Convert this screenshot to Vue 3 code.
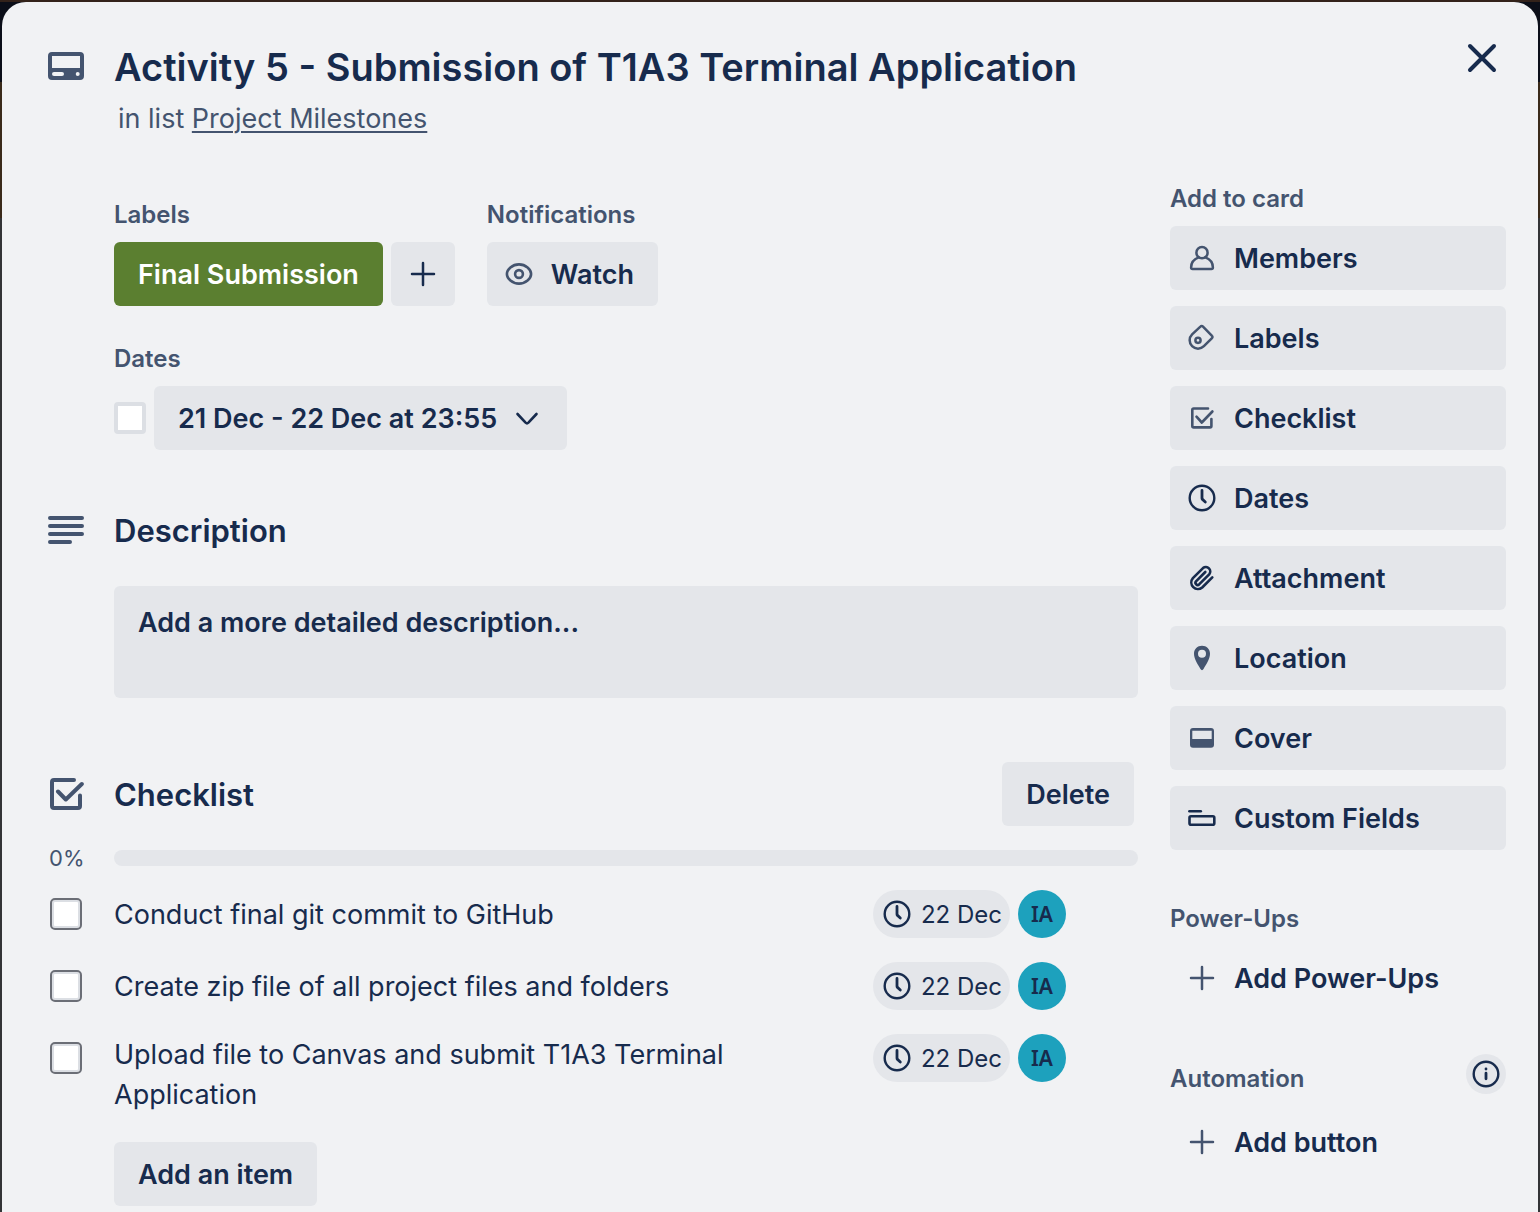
<script setup>
import { ref } from 'vue'

const clock = [
  { d: 'M16 3.7a12.3 12.3 0 1 1 0 24.6a12.3 12.3 0 1 1 0-24.6z', w: 2.4 },
  { d: 'M16 8.4v7.8q0 .7.5 1.2l2.8 2.6', w: 2.8 },
]
const plus = [{ d: 'M16 5v22M5 16h22', w: 2.5 }]

const actions = [
  {
    name: 'Members',
    subtle: true,
    paths: [
      { d: 'M16 5.1a5.6 5.6 0 1 1 0 11.2a5.6 5.6 0 1 1 0-11.2z', w: 2.5 },
      { d: 'M12.6 15.4C8 17.2 5.1 21 5.1 25.4q0 1.5 1.5 1.5h18.8q1.5 0 1.5-1.5c0-4.4-2.9-8.2-7.5-10', w: 2.5 },
    ],
  },
  {
    name: 'Labels',
    subtle: true,
    paths: [
      { d: 'M14.4 4.6L6.1 12.4A8.3 8.3 0 0 0 17.9 24.2L26 16.2a1.6 1.6 0 0 0 0-2.3L17 4.6a1.8 1.8 0 0 0-2.6 0z', w: 2.5 },
      { d: 'M12 15.7a2.6 2.6 0 1 1 0 5.2a2.6 2.6 0 1 1 0-5.2z', w: 2.5 },
    ],
  },
  {
    name: 'Checklist',
    subtle: true,
    paths: [
      { d: 'M22 6.5H7.7q-1.4 0-1.4 1.4V24q0 1.4 1.4 1.4H24q1.4 0 1.4-1.4V17', w: 2.6 },
      { d: 'M10.5 14.7l5.3 5.8L26.4 9.5', w: 2.6 },
    ],
  },
  { name: 'Dates', paths: clock },
  {
    name: 'Attachment',
    paths: [
      { d: 'M26.3 15.4l-10.1 10.1a6.6 6.6 0 0 1-9.3-9.3l10.1-10.1a4.4 4.4 0 0 1 6.2 6.2l-10.1 10.1a2.2 2.2 0 0 1-3.1-3.1l9.3-9.3', w: 2.6 },
    ],
  },
  {
    name: 'Location',
    subtle: true,
    paths: [
      { d: 'M16 3.8c-4.6 0-8 3.4-8 7.9 0 5 4 11 6.5 15.3.8 1.5 2.2 1.5 3 0C20 22.7 24 16.7 24 11.7c0-4.5-3.4-7.9-8-7.9zM16 7.7a4 4 0 1 1 0 8a4 4 0 1 1 0-8z', fill: true },
    ],
  },
  {
    name: 'Cover',
    subtle: true,
    paths: [
      { d: 'M7 6h18q3 0 3 3v13.7q0 3-3 3H7q-3 0-3-3V9q0-3 3-3zM6.3 8.7V17h19.4V8.7z', fill: true },
    ],
  },
  {
    name: 'Custom Fields',
    paths: [
      { d: 'M3.4 9.3h11.4', w: 2.6 },
      { d: 'M5 14.3h21.8q1.5 0 1.5 1.5v5.4q0 1.5-1.5 1.5H5q-1.5 0-1.5-1.5v-5.4q0-1.5 1.5-1.5z', w: 2.6 },
    ],
  },
]

const dueDone = ref(false)
const items = ref([
  { text: 'Conduct final git commit to GitHub', due: '22 Dec', member: 'IA', done: false },
  { text: 'Create zip file of all project files and folders', due: '22 Dec', member: 'IA', done: false },
  { text: 'Upload file to Canvas and submit T1A3 Terminal Application', due: '22 Dec', member: 'IA', done: false },
])
</script>

<template>
  <div class="dialog" role="dialog" aria-labelledby="card-title">
    <header class="header">
      <svg class="icon-lg card-icon" viewBox="0 0 36 36" aria-hidden="true">
        <path fill="currentColor" fill-rule="evenodd" d="M4 4h28q4 0 4 4v20q0 4-4 4H4q-4 0-4-4V8q0-4 4-4zM4 8v12h28V8zM6 24a2 2 0 0 0 0 4h8a2 2 0 0 0 0-4zM29.7 24a2 2 0 1 0 0 4a2 2 0 1 0 0-4z" />
      </svg>
      <div class="heading">
        <h1 id="card-title">Activity 5 - Submission of T1A3 Terminal Application</h1>
        <p>in list <a href="#">Project Milestones</a></p>
      </div>
      <button class="close" type="button" aria-label="Close">
        <svg viewBox="0 0 32 32" aria-hidden="true"><path d="M4 4l24 24M28 4L4 28" fill="none" stroke="currentColor" stroke-width="4" stroke-linecap="round" /></svg>
      </button>
    </header>

    <div class="columns">
      <main class="main">
        <div class="details">
          <section>
            <h3>Labels</h3>
            <div class="row">
              <button class="btn label" type="button">Final Submission</button>
              <button class="btn add" type="button" aria-label="Add label">
                <svg class="icon" viewBox="0 0 32 32" aria-hidden="true"><path v-for="p in plus" :key="p.d" :d="p.d" :stroke-width="p.w" class="line" /></svg>
              </button>
            </div>
          </section>
          <section>
            <h3>Notifications</h3>
            <button class="btn with-icon" type="button">
              <svg class="icon subtle" viewBox="0 0 32 32" aria-hidden="true">
                <path class="line" stroke-width="2.6" d="M3.9 16c0-4.5 5.4-9.6 12.1-9.6S28.1 11.5 28.1 16 22.7 25.6 16 25.6 3.9 20.5 3.9 16z" />
                <circle class="line" stroke-width="2.6" cx="16" cy="16" r="3.9" />
              </svg>
              <span>Watch</span>
            </button>
          </section>
        </div>

        <section class="dates">
          <h3>Dates</h3>
          <div class="row">
            <input v-model="dueDone" class="check due" type="checkbox" aria-label="Mark due date complete">
            <button class="btn date" type="button">
              21 Dec - 22 Dec at 23:55
              <svg class="chevron" viewBox="0 0 24 24" aria-hidden="true"><path class="line" stroke-width="2.6" d="M2.5 7l8.1 8.6q1.4 1.4 2.8 0L21.5 7" /></svg>
            </button>
          </div>
        </section>

        <section class="description">
          <div class="section-head">
            <svg class="icon-lg" viewBox="0 0 36 36" aria-hidden="true"><path class="line" stroke-width="4" d="M2 6h32M2 14h32M2 22h32M2 30h20" /></svg>
            <h2>Description</h2>
          </div>
          <button class="btn placeholder" type="button">Add a more detailed description...</button>
        </section>

        <section class="checklist">
          <div class="section-head">
            <svg class="icon-lg" viewBox="0 0 36 36" aria-hidden="true">
              <path class="line" stroke-width="4" d="M26 4H6Q4 4 4 6v24q0 2 2 2h24q2 0 2-2V19.5" />
              <path class="line" stroke-width="4" d="M10 15.5l7.8 8L33.8 8" />
            </svg>
            <h2>Checklist</h2>
            <button class="btn delete" type="button">Delete</button>
          </div>
          <div class="progress-row">
            <span class="percent">0%</span>
            <div class="track" role="progressbar" aria-label="Checklist progress" aria-valuenow="0" aria-valuemin="0" aria-valuemax="100"></div>
          </div>
          <ul class="items">
            <li v-for="(item, i) in items" :key="item.text">
              <input :id="`item-${i}`" v-model="item.done" class="check" type="checkbox">
              <label :for="`item-${i}`">{{ item.text }}</label>
              <button class="due-pill" type="button">
                <svg class="icon" viewBox="0 0 32 32" aria-hidden="true"><path v-for="p in clock" :key="p.d" :d="p.d" :stroke-width="p.w" class="line" /></svg>
                <span>{{ item.due }}</span>
              </button>
              <button class="avatar" type="button">{{ item.member }}</button>
            </li>
          </ul>
          <button class="btn add-item" type="button">Add an item</button>
        </section>
      </main>

      <aside class="sidebar">
        <h3>Add to card</h3>
        <div class="actions">
          <button v-for="a in actions" :key="a.name" class="btn with-icon" type="button">
            <svg class="icon" :class="{ subtle: a.subtle }" viewBox="0 0 32 32" aria-hidden="true">
              <path v-for="p in a.paths" :key="p.d" :d="p.d" :class="p.fill ? 'solid' : 'line'" :stroke-width="p.w" />
            </svg>
            <span>{{ a.name }}</span>
          </button>
        </div>

        <h3 class="power-ups">Power-Ups</h3>
        <button class="btn with-icon plain" type="button">
          <svg class="icon subtle" viewBox="0 0 32 32" aria-hidden="true"><path v-for="p in plus" :key="p.d" :d="p.d" :stroke-width="p.w" class="line" /></svg>
          <span>Add Power-Ups</span>
        </button>

        <div class="automation">
          <h3>Automation</h3>
          <button class="info" type="button" aria-label="About automation">
            <svg class="icon" viewBox="0 0 32 32" aria-hidden="true">
              <circle class="line" stroke-width="2.4" cx="16" cy="16" r="12.3" />
              <path class="line" stroke-width="2.8" d="M16 15.2v5.6M16 10.9v.1" />
            </svg>
          </button>
        </div>
        <button class="btn with-icon plain" type="button">
          <svg class="icon subtle" viewBox="0 0 32 32" aria-hidden="true"><path v-for="p in plus" :key="p.d" :d="p.d" :stroke-width="p.w" class="line" /></svg>
          <span>Add button</span>
        </button>
      </aside>
    </div>
  </div>
</template>

<style>
html {
  background: #333436;
}
body {
  margin: 0;
  padding-top: 2px;
  background: linear-gradient(#33221a 2px, #0b0e18 2px 82px, #3a2a1a 82px 218px, #333436 218px) no-repeat;
}
</style>

<style scoped>
.dialog {
  box-sizing: border-box;
  min-height: calc(100vh - 2px);
  margin: 0 2px;
  padding: 40px 32px 6px 46px;
  border-radius: 24px 24px 0 0;
  background: #f1f2f4;
  color: #172b4d;
  font-family: Inter, "Liberation Sans", sans-serif;
  font-size: 27px;
  line-height: 40px;
}

h1, h2, h3, p, ul { margin: 0; padding: 0; }
h1 { font-size: 38px; line-height: 50px; font-weight: 600; }
h2 { padding-top: 2px; font-size: 31px; line-height: 38px; font-weight: 600; }
h3 { margin-bottom: 15px; padding-top: 1px; font-size: 24px; line-height: 24px; font-weight: 600; color: #44546f; }

button {
  border: 0;
  padding: 0;
  background: none;
  color: inherit;
  font: inherit;
  cursor: pointer;
}

.icon-lg { width: 36px; height: 36px; flex: none; color: #44546f; }
.icon { width: 32px; height: 32px; flex: none; display: block; }
.subtle { color: #44546f; }
.line { fill: none; stroke: currentColor; stroke-linecap: round; stroke-linejoin: round; }
.solid { fill: currentColor; fill-rule: evenodd; }

.header { display: flex; align-items: flex-start; gap: 30px; }
.card-icon { margin-top: 6px; }
.heading { flex: 1; }
.heading p { padding: 11px 0 0 4px; line-height: 31px; color: #44546f; }
.heading a { color: inherit; text-decoration: underline; text-underline-offset: 3px; text-decoration-thickness: 2px; }
.close { width: 48px; height: 32px; display: grid; place-items: center; }
.close svg { width: 32px; height: 32px; }

.columns { display: flex; align-items: flex-start; gap: 32px; margin-top: 52px; }
.main { flex: 1; min-width: 0; padding-top: 16px; }
.details, .dates { padding-left: 66px; }
.details { display: flex; gap: 32px; }
.dates { margin-top: 40px; }
.row { display: flex; align-items: center; gap: 8px; }

.btn {
  box-sizing: border-box;
  min-height: 64px;
  padding: 13px 24px 11px;
  border-radius: 6px;
  background: #e4e6ea;
  font-weight: 600;
  white-space: nowrap;
}
.label { background: #5b7f30; color: #fff; }
.add { padding: 16px; }
.with-icon { display: flex; align-items: center; gap: 16px; padding: 11px 24px 11px 16px; text-align: left; }
.with-icon span, .due-pill span { padding-top: 2px; }
.plain { background: none; }
.date { display: flex; align-items: center; gap: 18px; padding-right: 28px; }
.chevron { width: 24px; height: 24px; }

.check {
  appearance: none;
  box-sizing: border-box;
  flex: none;
  width: 32px;
  height: 32px;
  margin: 0;
  border: 2px solid #6b6e76;
  border-radius: 5px;
  background: #fff;
  box-shadow: inset 0 0 0 2px #dcdfe4;
}
.due { border: 4px solid #dcdfe4; border-radius: 4px; box-shadow: none; }
.check:checked { background: #0c66e4; }

.description { margin-top: 60px; }
.section-head { display: flex; align-items: center; gap: 30px; }
.section-head h2 { flex: 1; }
.placeholder {
  display: flex;
  align-items: flex-start;
  width: calc(100% - 66px);
  min-height: 112px;
  margin: 36px 0 0 66px;
  padding-top: 17px;
}

.checklist { margin-top: 64px; }
.delete { margin-right: 4px; }
.progress-row { display: flex; align-items: center; margin-top: 20px; }
.percent { width: 66px; box-sizing: border-box; padding-left: 1px; font-size: 22px; line-height: 24px; color: #44546f; }
.track { flex: 1; height: 16px; border-radius: 8px; background: #e4e6ea; }

.items { display: flex; flex-direction: column; gap: 24px; margin-top: 20px; list-style: none; }
.items li { display: flex; align-items: flex-start; padding: 0 72px 0 2px; gap: 8px; }
.items .check { margin: 8px 24px 0 0; }
.items label { flex: 1; padding-top: 1px; }
.items li:not(:last-child) label { padding-top: 5px; }
.due-pill {
  box-sizing: border-box;
  display: flex;
  align-items: center;
  gap: 8px;
  height: 48px;
  padding: 0 8px;
  border-radius: 24px;
  background: #e4e6ea;
  font-size: 24px;
}
.avatar {
  width: 48px;
  height: 48px;
  border-radius: 50%;
  background: #1da1bd;
  font: 600 21px/48px "Noto Sans", sans-serif;
}
.add-item { margin: 27px 0 0 66px; }

.sidebar { width: 336px; flex: none; }
.actions { display: flex; flex-direction: column; gap: 16px; }
.power-ups { margin-top: 56px; }
.automation { display: flex; align-items: flex-end; justify-content: space-between; margin: 44px 0 16px; }
.automation h3 { margin: 0; line-height: 31px; }
.info { width: 40px; height: 40px; display: grid; place-items: center; border-radius: 50%; background: #e4e6ea; }
</style>
